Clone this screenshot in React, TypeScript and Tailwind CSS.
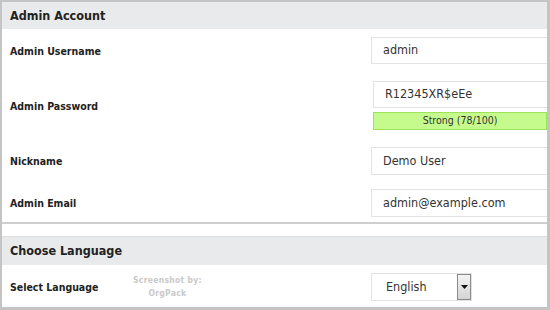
import React from 'react'

const font = { fontFamily: '"DejaVu Sans Condensed", "DejaVu Sans", Verdana, sans-serif' }

const Field: React.FC<{ value: string; className?: string }> = ({ value, className }) => (
  <div className={`h-[27px] w-[190px] shrink-0 border border-[#e3e3e3] bg-white pl-[11px] flex items-center text-[12.5px] text-[#333] ${className ?? ''}`}>
    {value}
  </div>
)

const Row: React.FC<{ label: string; className?: string; children: React.ReactNode }> = ({ label, className, children }) => (
  <div className={`flex items-center ${className ?? ''}`}>
    <div className="w-[369px] shrink-0 pl-[8px] pt-[2px] text-[10.5px] font-bold text-[#222]">{label}</div>
    {children}
  </div>
)

const App: React.FC = () => {
  return (
    <div style={font} className="w-[550px] h-[310px] overflow-hidden bg-[#c4c4c4] pt-[2px] pl-[2px] pr-[3px] pb-[3px]">
      <div className="h-full bg-white overflow-hidden flex flex-col">
        {/* Admin Account */}
        <div className="h-[222px] shrink-0 border-b-2 border-[#cfcfcf] overflow-hidden">
          <div className="h-[27px] bg-[#e9eaeb] pl-[8px] pt-[1px] flex items-center text-[12.5px] font-bold text-[#222]">Admin Account</div>
          <Row label="Admin Username" className="mt-[8px]">
            <Field value="admin" />
          </Row>
          <Row label="Admin Password" className="mt-[17px]">
            <div className="ml-[2px] flex flex-col gap-[4px]">
              <Field value="R12345XR$eEe" />
              <div className="h-[18px] w-[174px] border border-[#9ee25c] bg-[#c5fb8c] flex items-center justify-center text-[10.5px] text-[#333]">
                Strong (78/100)
              </div>
            </div>
          </Row>
          <Row label="Nickname" className="mt-[17px]">
            <Field value="Demo User" className="h-[28px]" />
          </Row>
          <Row label="Admin Email" className="mt-[14px]">
            <Field value="admin@example.com" className="h-[28px]" />
          </Row>
        </div>

        {/* Choose Language */}
        <div className="mt-[12px] border-t border-[#dcdcdc] flex-1">
          <div className="h-[28px] bg-[#e9eaeb] pl-[8px] pt-[1px] flex items-center text-[12.5px] font-bold text-[#222]">Choose Language</div>
          <div className="relative">
            <Row label="Select Language" className="mt-[8px]">
              <div className="h-[28px] w-[101px] border border-[#e3e3e3] bg-white flex items-center">
                <span className="flex-1 pl-[14px] text-[12.5px] text-[#333]">English</span>
                <span className="h-[26px] w-[14px] self-start border border-[#8a8a8a] bg-gradient-to-b from-[#f4f4f4] to-[#d4d4d4] flex items-center justify-center">
                  <svg width="7" height="4" viewBox="0 0 7 4"><path d="M0 0h7L3.5 4z" fill="#111" /></svg>
                </span>
              </div>
            </Row>
            <div className="absolute left-[131px] top-[1px] text-center text-[8.5px] font-bold leading-[13px] tracking-[0.3px] text-[#c9c9c9]">
              Screenshot by:<br />OrgPack
            </div>
          </div>
        </div>
      </div>
    </div>
  )
}

export default App
